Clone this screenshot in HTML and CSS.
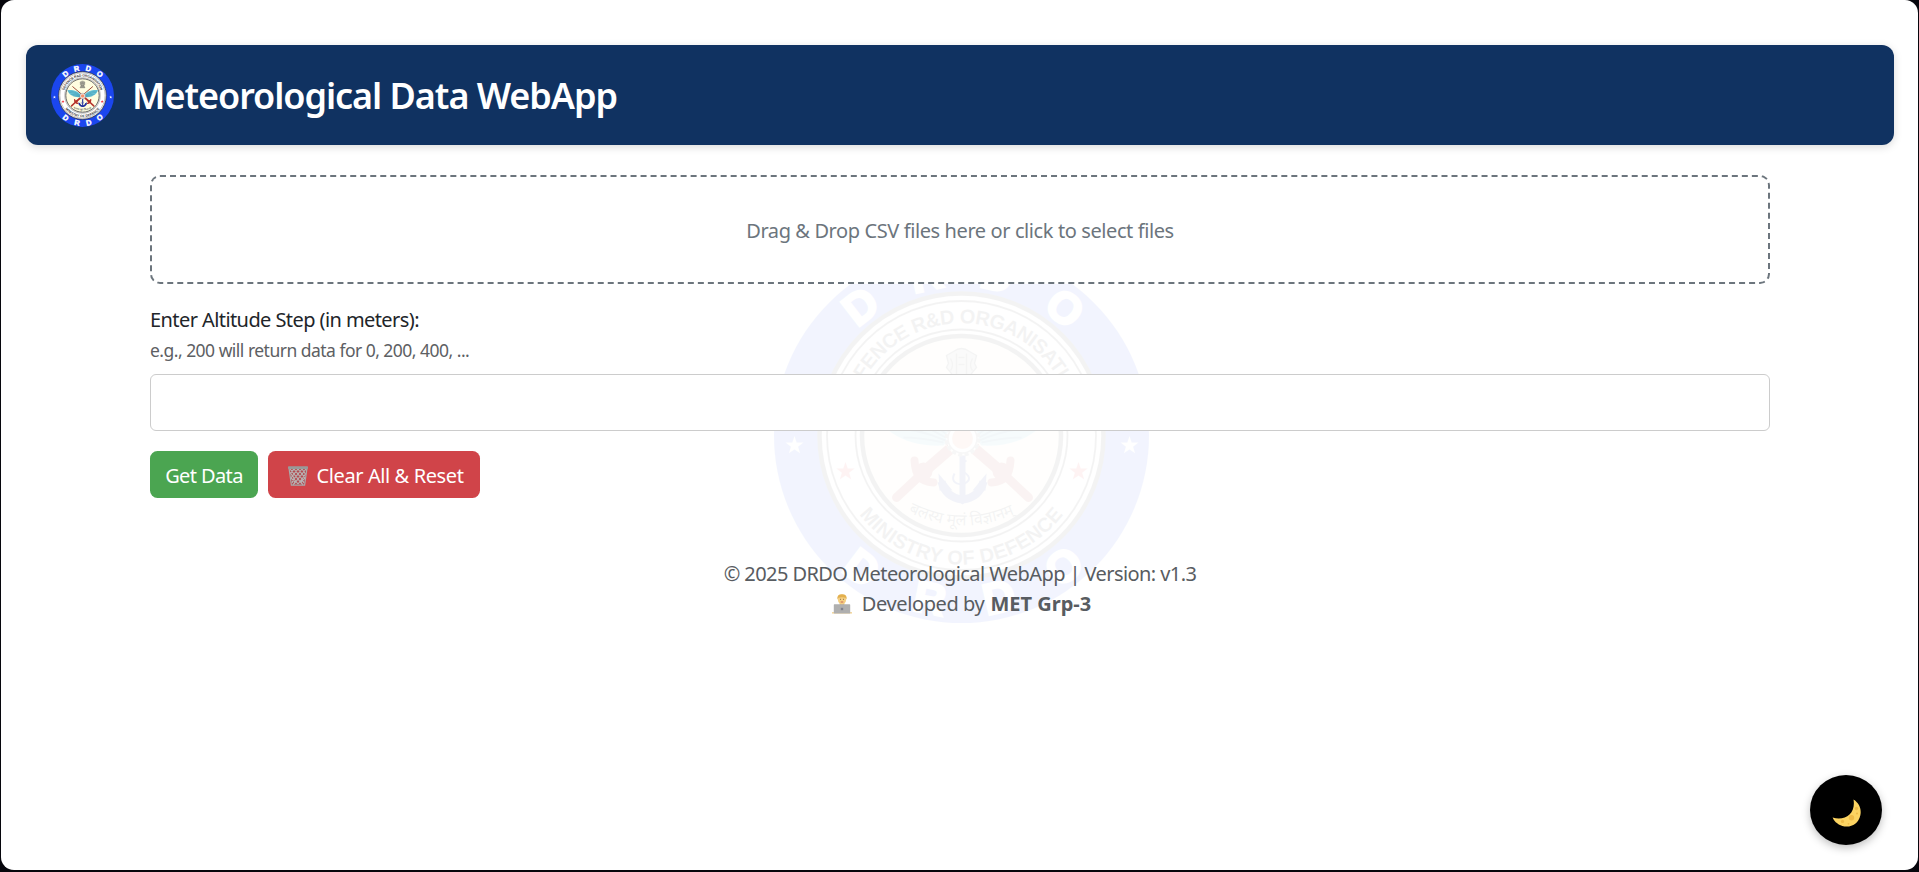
FILE: index.html
```html
<!DOCTYPE html>
<html lang="en">
<head>
<meta charset="utf-8">
<title>Meteorological Data WebApp</title>
<link rel="stylesheet" href="styles.css">
</head>
<body>
<svg class="defs" width="0" height="0" aria-hidden="true">
  <defs>
    <path id="arc-top" d="M-109.5 23.3A112 112 0 1 1 109.5 23.3"/>
    <path id="arc-bottom" d="M-129 0A129 129 0 0 0 129 0"/>
    <path id="arc-motto" d="M-54 76Q0 103 54 78"/>
    <path id="star" d="M0-9.5L2.2-3H9L3.6 1.2 5.6 7.8 0 3.9-5.6 7.8-3.6 1.2-9-3H-2.2Z"/>
    <g id="sword">
      <path d="M-14 11L62-54" stroke="#8c2a1c" stroke-width="5" fill="none"/>
      <path d="M-12 14L-34 33" stroke="#b5322a" stroke-width="11" fill="none"/>
      <path d="M-34 33L-65 62" stroke="#b5322a" stroke-width="9" stroke-linecap="round" fill="none"/>
      <path d="M-47 25C-46 40-42 46-28 47" stroke="#b5322a" stroke-width="8" stroke-linecap="round" fill="none"/>
      <circle cx="-38" cy="36" r="9" fill="#b5322a"/>
    </g>
    <g id="wing">
      <path d="M-8-2C-26-28-58-36-90-32-84-8-60 12-18 10Z" fill="#6cc6da"/>
      <path d="M-84-26C-62-27-36-19-16-2M-80-18C-58-18-40-12-16 2M-70-7C-52-7-36-4-16 5M-58 2C-44 2-32 4-18 7" fill="none" stroke="#247d9a" stroke-width="2"/>
    </g>
    <symbol id="seal" viewBox="-187.5 -187.5 375 375">
      <circle r="187.5" fill="#1b46ee"/>
      <circle r="142" fill="#fff" stroke="#333" stroke-width="4.5"/>
      <circle r="134.5" fill="none" stroke="#333" stroke-width="1.8"/>
      <circle r="106" fill="none" stroke="#333" stroke-width="1.8"/>
      <circle r="99.5" fill="#fffde0" stroke="#333" stroke-width="4.5"/>
      <g class="seal-big">
        <text transform="rotate(-38) translate(0 -149)">D</text>
        <text transform="rotate(-12.5) translate(0 -149)">R</text>
        <text transform="rotate(12.5) translate(0 -149)">D</text>
        <text transform="rotate(39) translate(0 -149)">O</text>
        <text transform="rotate(37) translate(0 181)">D</text>
        <text transform="rotate(11) translate(0 181)">R</text>
        <text transform="rotate(-13) translate(0 181)">D</text>
        <text transform="rotate(-38) translate(0 181)">O</text>
      </g>
      <use href="#star" x="-167" y="10" fill="#fff"/>
      <use href="#star" x="168" y="10" fill="#fff"/>
      <use href="#star" x="-116" y="36" fill="#f22b35"/>
      <use href="#star" x="117" y="36" fill="#f22b35"/>
      <g class="seal-ring">
        <text class="seal-ring-top"><textPath href="#arc-top" startOffset="50%">DEFENCE R&amp;D ORGANISATION</textPath></text>
        <text class="seal-ring-low"><textPath href="#arc-bottom" startOffset="50%">MINISTRY OF DEFENCE</textPath></text>
      </g>
      <text class="seal-motto"><textPath href="#arc-motto" startOffset="50%">बलस्य मूलं विज्ञानम्</textPath></text>
      <use href="#sword"/>
      <use href="#sword" transform="translate(2 0) scale(-1 1)"/>
      <use href="#wing"/>
      <use href="#wing" transform="translate(2 0) scale(-1 1)"/>
      <g fill="#b5b3a4" stroke="#444" stroke-width="1.4">
        <path d="M-8-84Q0-90 8-84L15-80 13-72 15-68 10-62 9-57H-9L-10-62-15-68-13-72-15-80Z"/>
        <path d="M-11-57H11V-51H-11ZM-15-49H15V-45H-15Z"/>
        <path d="M-5-82V-60M5-82V-60M-11-77Q-7-70-11-65M11-77Q7-70 11-65M-3-78H3M-3-71H3" fill="none"/>
      </g>
      <g fill="none" stroke="#20309c" stroke-width="6">
        <path d="M1 20V64"/>
        <path d="M-20 46Q-16 62 1 64Q18 62 22 46" stroke-width="8"/>
        <path d="M-7 38Q-12 48 1 49Q13 44 3 37Q-5 31 5 25" stroke-width="2"/>
      </g>
      <path d="M-23 38L-9 55-22 55ZM25 38L11 55 24 55ZM-8 62L1 69 10 62Z" fill="#20309c"/>
      <circle cx="1" cy="3" r="16" fill="#fff" stroke="#777" stroke-width="4" stroke-dasharray="4 2.3"/>
      <circle cx="1" cy="3" r="14.5" fill="#fff" stroke="#777" stroke-width="1.5"/>
      <circle cx="1" cy="3" r="10.5" fill="#f9906a"/>
    </symbol>
  </defs>
</svg>

<div class="page">
  <svg class="watermark" aria-hidden="true"><use href="#seal"/></svg>

  <header class="topbar">
    <svg class="logo"><use href="#seal"/></svg>
    <h1 class="title">Meteorological Data WebApp</h1>
  </header>

  <main class="content">
    <div class="dropzone"><span class="drop-text">Drag &amp; Drop CSV files here or click to select files</span></div>

    <label class="label" for="step">Enter Altitude Step (in meters):</label>
    <small class="hint">e.g., 200 will return data for 0, 200, 400, ...</small>
    <input class="field" id="step" type="text">

    <div class="actions">
      <button class="btn btn-get" type="button">Get Data</button>
      <button class="btn btn-clear" type="button">
        <svg class="icon-bin" viewBox="0 0 20 20">
          <path d="M1 2L3.4 19.5H16.6L19 2Z" fill="#b24a50"/>
          <path d="M2 3L6 8 3 12 7 16 5 19M6 3L10 8 6 13 10 18M10 3L14 8 10 13 14 18M14 3L17.5 8 14 13 16 17M18 3L14 8 17 12 13 16 15 19M14 3L10 8 14 13 10 18M10 3L6 8 10 13 6 18M6 3L2.5 7 6 12 4 17" fill="none" stroke="#b9b5b5" stroke-width="1.15"/>
          <path d="M1 2L3.4 19.2H16.6L19 2" fill="none" stroke="#aaa" stroke-width="1.2"/>
          <rect x="0" y=".3" width="20" height="2.6" rx=".8" fill="#999"/>
        </svg>
        <span>Clear All &amp; Reset</span>
      </button>
    </div>
  </main>

  <footer class="footer">
    <p class="foot-line"><span class="copyright">© 2025 DRDO Meteorological WebApp | Version: v1.3</span></p>
    <p class="foot-line foot-dev">
      <svg class="icon-dev" viewBox="0 0 20 20">
        <path d="M3 19Q3 11 10 11T17 19Z" fill="#c5b59c"/>
        <rect x="7.7" y="8" width="4.6" height="4" fill="#e3b66b"/>
        <ellipse cx="10" cy="5.5" rx="4.1" ry="4.9" fill="#f5cf82"/>
        <path d="M5.4 5.5Q4.6.2 10 .2T14.6 5.5L13.4 3.8Q10 2.6 6.6 3.8Z" fill="#e3b04e"/>
        <path d="M8 5.3h1M11 5.3h1" stroke="#765943" stroke-width=".8"/>
        <path d="M8.7 8h2.6" stroke="#c65b55" stroke-width=".9"/>
        <path d="M0 18.2h20v1.3H0Z" fill="#f0cf8a"/>
        <rect x="1.8" y="10.3" width="16.400" height="9.2" rx=".6" fill="#afafaf"/>
        <rect x="8.8" y="13.8" width="2.4" height="2.4" fill="#80808a"/>
      </svg>
      <span class="dev">Developed by</span>
      <strong class="team">MET Grp-3</strong>
    </p>
  </footer>

  <button class="theme-toggle" type="button" aria-label="Toggle theme">
    <svg class="icon-moon" viewBox="0 0 29 28">
      <path d="M21.5.6C27 4 29.8 10 28.3 16.5 26.5 24.5 19.5 28.5 12.5 27.4 7 26.6 2.5 23.3.6 18.6 7 20.5 13.5 19.5 17.5 15.5 21.5 11.5 22.5 6 21.5.6Z" fill="#fcd462"/>
      <g fill="#eebb48"><circle cx="19.5" cy="18.8" r="2.7"/><circle cx="24.5" cy="9.5" r="1.7"/><circle cx="10.5" cy="22.4" r="1.6"/><circle cx="25" cy="14.5" r="1.1"/><circle cx="16.5" cy="24.8" r=".9"/></g>
    </svg>
  </button>
</div>
</body>
</html>
```

FILE: styles.css
```css
* { box-sizing: border-box; }

body {
  margin: 0;
  height: 872px;
  overflow: hidden;
  background: #06060c;
  color: #212529;
  font: 20px/30px "Noto Sans", "Open Sans", sans-serif;
}

.defs { position: absolute; }

.page {
  position: relative;
  height: 870px;
  margin: 0 1px;
  padding: 45px 24px 0 25px;
  border-radius: 13px;
  background: #fff;
  overflow: hidden;
}

.watermark {
  position: absolute;
  left: 772.5px;
  top: 248px;
  width: 375px;
  height: 375px;
  opacity: .052;
}

.seal-big {
  fill: #fff;
  stroke: #fff;
  stroke-width: 2.5px;
  font: bold 44px "Liberation Sans", Arial, sans-serif;
  text-anchor: middle;
}

.seal-ring {
  fill: #333;
  font: bold 20px "Liberation Sans", Arial, sans-serif;
  text-anchor: middle;
}

.seal-ring-top { letter-spacing: -.6px; }
.seal-ring-low { letter-spacing: .35px; }

.seal-motto {
  fill: #333;
  font: 16px "Noto Sans Devanagari", "Noto Sans", sans-serif;
  text-anchor: middle;
}

.topbar {
  position: relative;
  display: flex;
  align-items: center;
  gap: 18px;
  height: 100px;
  padding: 0 25px;
  border-radius: 12px;
  background: #103261;
  box-shadow: 0 2px 8px rgba(0, 0, 0, .15);
}

.logo { width: 63px; height: 63px; }

.title {
  margin: 0;
  padding-top: 2px;
  color: #fff;
  font-size: 36px;
  font-weight: 600;
  line-height: 50px;
  letter-spacing: -1.05px;
  white-space: nowrap;
}

.content {
  position: relative;
  display: flex;
  flex-direction: column;
  width: 1620px;
  margin: 30px 0 0 124px;
}

.dropzone {
  display: flex;
  align-items: center;
  justify-content: center;
  height: 109px;
  margin-bottom: 21px;
  padding-top: 2px;
  border: 2px dashed #6c757d;
  border-radius: 10px;
  background: #fff;
  color: #6c757d;
}

.drop-text { letter-spacing: -.4px; }
.label { align-self: flex-start; letter-spacing: -.58px; }

.hint {
  align-self: flex-start;
  color: #5d6063;
  font-size: 17.5px;
  letter-spacing: -.52px;
}

.field {
  height: 57px;
  margin-top: 9px;
  padding: 10px 15px;
  border: 1px solid #ccc;
  border-radius: 6px;
  background: #fff;
  font: inherit;
}

.actions { display: flex; gap: 10px; margin-top: 20px; }

.btn {
  display: flex;
  align-items: center;
  justify-content: center;
  height: 47px;
  padding: 2px 0 0;
  border: 0;
  border-radius: 7.5px;
  color: #fff;
  font: inherit;
  letter-spacing: -.4px;
  white-space: nowrap;
}

.btn-get { width: 108px; background: #4ba551; letter-spacing: -.6px; }
.btn-clear { width: 212px; gap: 9px; padding-left: 3px; background: #d04449; }
.icon-bin { width: 20px; height: 20px; }

.footer { position: relative; margin-top: 61px; color: #585c61; }
.foot-line { display: flex; justify-content: center; align-items: center; margin: 0; }
.foot-dev { padding-left: 3px; }
.copyright { letter-spacing: -.58px; }
.dev { margin-right: 6px; letter-spacing: -.4px; }
.team { letter-spacing: 0; }
.icon-dev { width: 20px; height: 20px; margin-right: 10px; }

.theme-toggle {
  position: absolute;
  right: 36px;
  bottom: 25px;
  display: flex;
  align-items: center;
  justify-content: center;
  width: 72px;
  height: 70px;
  padding: 6px 0 0 1px;
  border: 0;
  border-radius: 50%;
  background: #000;
  box-shadow: 0 3px 9px rgba(0, 0, 0, .25);
}

.icon-moon { width: 29px; height: 28px; }
```
